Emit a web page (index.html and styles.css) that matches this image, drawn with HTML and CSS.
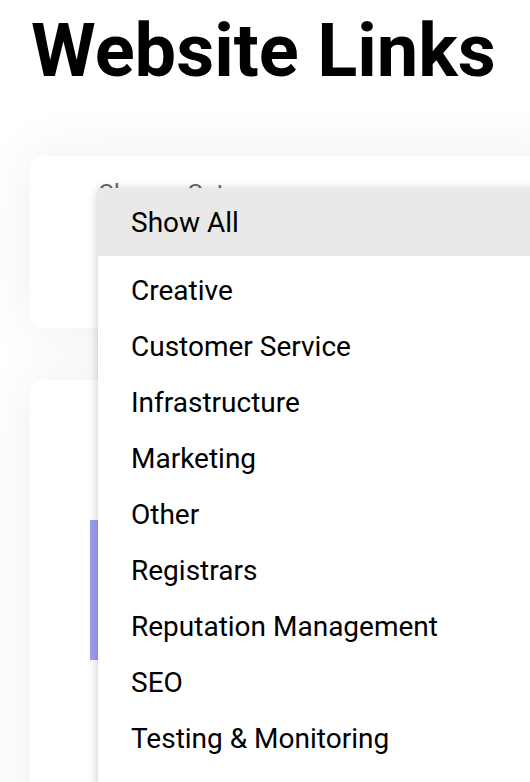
FILE: index.html
```
<!DOCTYPE html>
<html lang="en">
<head>
<meta charset="utf-8">
<title>Website Links</title>
<link rel="stylesheet" href="styles.css">
</head>
<body>
<div class="page">
  <h1 class="title">Website Links</h1>
  <section class="card card-filter">
    <label class="field-label">Choose Category</label>
    <div class="select-box"></div>
  </section>
  <section class="card card-list">
    <div class="link-item">
      <div class="link-accent"></div>
    </div>
  </section>
</div>
<div class="dropdown">
  <div class="option option-selected">Show All</div>
  <ul class="option-list">
    <li class="option">Creative</li>
    <li class="option">Customer Service</li>
    <li class="option">Infrastructure</li>
    <li class="option">Marketing</li>
    <li class="option">Other</li>
    <li class="option">Registrars</li>
    <li class="option">Reputation Management</li>
    <li class="option">SEO</li>
    <li class="option">Testing &amp; Monitoring</li>
  </ul>
</div>
</body>
</html>
```

FILE: styles.css
```
html, body {
  margin: 0;
  padding: 0;
  overflow: hidden;
  background: #ffffff;
  font-family: Roboto, "Liberation Sans", Arial, sans-serif;
  color: #000;
}

body {
  width: 530px;
  height: 782px;
  position: relative;
}

.page {
  padding: 14px 0 0 30px;
}

.title {
  margin: 0;
  padding-left: 1px;
  font-size: 74px;
  line-height: 74px;
  font-weight: 700;
  color: #000;
}

.card {
  width: 560px;
  background: #fff;
  border-radius: 12px;
  box-shadow: 0 0 60px rgba(0, 0, 0, 0.07);
  box-sizing: border-box;
}

.card-filter {
  margin-top: 68px;
  height: 172px;
  padding: 22px 0 0 68px;
}

.field-label {
  display: block;
  font-size: 24.5px;
  line-height: 30px;
  color: #666;
}

.card-list {
  margin-top: 52px;
  height: 520px;
  padding: 140px 0 0 60px;
}

.link-item {
  display: flex;
}

.link-accent {
  width: 10px;
  height: 140px;
  background: #9c9ff0;
}

.dropdown {
  position: absolute;
  left: 98px;
  top: 188px;
  width: 460px;
  height: 620px;
  background: #fff;
  box-shadow: 0 2px 10px rgba(0, 0, 0, 0.22);
}

.option-list {
  list-style: none;
  margin: 7px 0 0 0;
  padding: 0;
}

.option {
  height: 56px;
  line-height: 56px;
  padding-left: 33px;
  font-size: 28px;
  color: #000;
  white-space: nowrap;
}

.option-selected {
  height: 67px;
  line-height: 67px;
  padding-top: 1px;
  background: #e9e9e9;
}
```
